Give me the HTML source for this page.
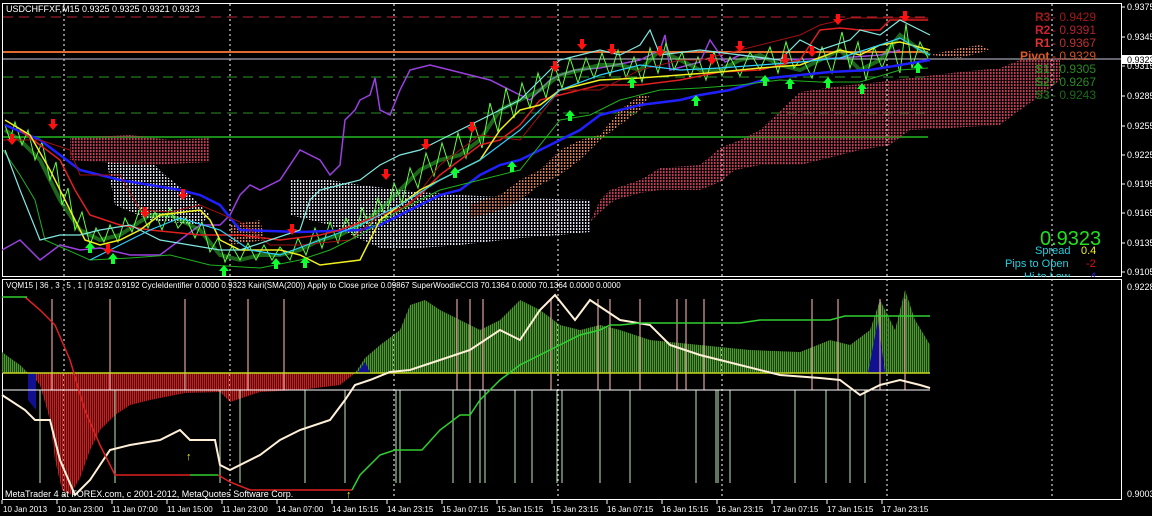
<!DOCTYPE html>
<html><head><meta charset="utf-8"><style>
html,body{margin:0;padding:0;background:#000;width:1152px;height:516px;overflow:hidden}
svg{display:block}
text{font-family:"Liberation Sans",sans-serif}
</style></head><body>
<svg width="1152" height="516" viewBox="0 0 1152 516" xmlns="http://www.w3.org/2000/svg">
<defs>
<pattern id="rd" width="3" height="3" patternUnits="userSpaceOnUse"><rect width="1.6" height="2.2" fill="#c8385a"/></pattern>
<pattern id="wd" width="3" height="3" patternUnits="userSpaceOnUse"><rect width="1.4" height="2" fill="#e0e0f0"/></pattern>
<pattern id="od" width="3" height="3" patternUnits="userSpaceOnUse"><rect width="1.4" height="2" fill="#e08050"/></pattern>
<pattern id="rh" width="2" height="4" patternUnits="userSpaceOnUse"><rect width="1.4" height="4" fill="#c82020"/></pattern>
<pattern id="gh" width="2" height="4" patternUnits="userSpaceOnUse"><rect width="1.4" height="4" fill="#4a9a30"/></pattern>
<g id="dn"><polygon points="-2,-6 2,-6 2,-1 5,-1 0,5 -5,-1 -2,-1" fill="#ff1010"/></g>
<g id="up"><polygon points="-2,6 2,6 2,1 5,1 0,-5 -5,1 -2,1" fill="#10ff30"/></g>
</defs>
<rect width="1152" height="516" fill="#000"/>
<rect x="2.5" y="3.5" width="1119" height="273" fill="none" stroke="#fff" stroke-width="1"/>
<rect x="2.5" y="279.5" width="1119" height="220" fill="none" stroke="#fff" stroke-width="1"/>
<g stroke="#fff" stroke-dasharray="2,3" stroke-width="1">
<path d="M64 4V499M230 4V499M394 4V499M558 4V499M722 4V499M887 4V499M1052 4V499"/>
</g>
<path d="M3 17H928" stroke="#c02030" stroke-dasharray="10,6"/>
<path d="M3 52H928" stroke="#e06a30" stroke-width="2"/>
<path d="M3 59H1121" stroke="#c8c8d8"/>
<path d="M3 77H928" stroke="#2a9a2a" stroke-dasharray="10,6"/>
<path d="M3 113H928" stroke="#2a8a2a" stroke-dasharray="10,6"/>
<path d="M3 137H928" stroke="#1a8a1a" stroke-width="2"/>
<!-- clouds -->
<polygon points="590,222 600,212 615,200 640,193 660,190 700,190 720,182 735,170 760,165 800,165 840,155 860,150 890,145 910,130 950,128 1000,125 1020,110 1040,96 1060,80 1060,58 1020,60 1000,68 960,72 910,78 880,82 840,86 800,92 760,130 740,140 720,148 700,165 660,168 640,180 610,190 600,200" fill="url(#rd)"/>
<polygon points="290,180 330,180 360,185 420,192 460,195 520,198 590,200 590,232 560,235 520,238 460,245 420,248 380,248 330,225 290,215" fill="url(#wd)"/>
<polygon points="105,152 140,150 165,175 190,195 210,215 200,225 150,220 115,205" fill="url(#wd)"/>
<polygon points="70,138 130,135 170,140 210,138 210,162 150,165 100,162 70,160" fill="url(#rd)"/>
<polygon points="470,205 500,195 520,180 540,170 560,150 580,140 600,135 620,110 640,95 650,95 640,110 620,125 600,140 580,160 560,175 540,185 520,200 500,210 470,218" fill="url(#od)"/>
<polygon points="230,225 260,220 265,240 230,245" fill="url(#od)"/>
<polygon points="930,55 960,48 980,45 990,50 960,58" fill="url(#od)"/>
<polyline fill="none" stroke="#9a40e0" stroke-width="1.5" points="2,250 20,240 40,260 60,245 80,250 100,248 130,255 160,255 180,240 200,225 220,225 230,215 240,195 250,185 260,190 280,180 300,150 320,160 330,175 340,165 345,120 355,110 360,100 370,95 375,78 380,110 390,115 400,90 410,70 430,65 450,70 470,75 490,80 510,90 530,100 540,90 550,80 560,75 575,70 600,68 640,60 660,50 665,35 670,70 700,62 710,40 725,62 740,55 780,60 840,58 880,55 900,50"/>
<polyline fill="none" stroke="#40e040" stroke-width="4" stroke-opacity="0.45" points="5,130 20,140 40,160 60,200 80,230 100,240 120,235 150,215 170,215 200,230 220,255 240,260 260,255 280,255 300,250 320,240 340,235 360,225 380,210 400,190 420,170 440,160 460,155 480,140 500,110 520,100 540,90 560,75 580,70 600,65 620,65 640,70 660,50 680,60 700,70 720,70 740,60 760,55 780,65 800,70 820,60 840,50 860,70 880,60 900,35 920,50 930,55"/>
<polyline fill="none" stroke="#60ff40" stroke-width="1" points="5,125 10,140 15,122 22,145 28,130 35,160 42,142 50,180 56,162 62,205 68,188 75,230 82,212 90,245 96,228 104,242 110,225 118,242 125,218 132,232 140,208 148,228 155,212 162,230 170,208 178,228 186,218 195,238 202,222 210,252 218,238 225,262 232,246 240,260 248,243 256,260 264,245 272,260 280,247 290,260 298,238 306,255 315,228 322,248 330,222 338,243 346,218 355,238 362,208 370,228 378,198 386,218 394,183 402,203 410,168 418,188 426,153 434,176 442,143 450,168 458,133 466,158 474,123 482,148 490,103 498,132 506,88 514,118 522,83 530,108 538,73 546,98 554,64 562,88 570,58 578,83 586,58 594,78 602,53 610,76 618,50 626,78 634,57 642,82 650,48 658,73 666,43 674,70 682,52 690,78 698,57 706,80 714,52 722,76 730,57 740,76 750,52 760,70 770,47 778,73 786,42 794,68 802,57 812,78 822,47 832,73 842,32 850,68 858,42 866,80 874,47 882,68 892,42 900,73 906,24 912,68 920,42 928,58"/>
<polyline fill="none" stroke="#2020ff" stroke-width="2.5" points="5,125 40,140 60,155 80,170 120,180 150,185 180,190 200,195 220,205 240,230 300,232 360,230 380,225 400,215 420,205 440,195 460,190 480,175 500,165 520,160 540,150 560,140 580,130 600,115 640,105 680,100 700,95 730,90 770,78 800,75 830,72 870,70 900,65 930,60"/>
<polyline fill="none" stroke="#e02020" stroke-width="1.5" points="20,130 60,160 75,190 90,215 120,225 150,230 200,235 240,235 280,240 320,235 340,230 380,215 400,210 420,195 440,175 460,160 480,145 500,140 520,125 540,100 560,95 580,90 600,85 640,85 680,80 720,72 760,70 800,60 820,30 840,28 860,30 880,30 890,20 928,20"/>
<polyline fill="none" stroke="#a01010" stroke-width="1" points="3,140 40,140 70,150 80,175 120,175 140,210 170,212 200,205 240,222 270,245 300,245 350,240 380,215 410,205 440,165 480,135 520,140 560,90 600,90 640,70 680,60 700,60 740,50 780,40 800,35 820,25 850,18 900,18 928,18"/>
<polyline fill="none" stroke="#20b020" stroke-width="1" points="3,150 20,175 35,200 45,240 90,260 130,258 170,255 210,265 260,268 300,260 330,250 360,235 400,210 440,190 480,180 520,170 560,120 590,115 620,100 660,90 700,88 740,85 780,80 820,82 860,82 900,70 928,68"/>
<polyline fill="none" stroke="#f0f020" stroke-width="1.5" points="5,120 30,135 50,170 70,210 85,240 100,245 120,240 140,230 160,215 200,210 210,220 220,240 240,250 280,250 300,255 320,265 360,260 380,220 400,205 420,190 440,180 460,170 480,160 500,130 520,110 540,105 560,90 580,85 600,80 640,78 680,75 720,72 760,68 800,65 840,50 860,55 880,45 900,42 930,50"/>
<polyline fill="none" stroke="#80e8e0" stroke-width="1.2" points="5,150 20,190 40,240 60,235 80,235 100,230 130,225 160,240 190,245 220,250 240,250 270,240 300,230 310,200 320,190 340,185 360,180 380,165 400,155 420,150 440,140 460,130 480,120 500,110 520,100 540,80 560,60 580,55 600,50 620,55 640,45 650,30 660,55 700,50 740,55 780,60 800,40 820,50 850,40 860,30 880,35 900,20 920,30 930,35"/>
<polyline fill="none" stroke="#30d0ff" stroke-width="1.2" points="90,260 120,245 150,230 180,218 220,230 250,250 280,255 320,240 360,225 400,205 440,180 480,160 520,130 560,90 600,75 640,65 680,70 720,68 760,65 800,62 840,58 880,45 900,38 920,50 930,55"/>
<g>
<use href="#dn" x="53" y="125"/><use href="#dn" x="145" y="213"/><use href="#dn" x="183" y="195"/><use href="#dn" x="108" y="250"/><use href="#dn" x="292" y="230"/><use href="#dn" x="386" y="175"/><use href="#dn" x="426" y="145"/><use href="#dn" x="472" y="128"/><use href="#dn" x="555" y="67"/><use href="#dn" x="582" y="45"/><use href="#dn" x="612" y="50"/><use href="#dn" x="660" y="52"/><use href="#dn" x="712" y="60"/><use href="#dn" x="740" y="47"/><use href="#dn" x="785" y="60"/><use href="#dn" x="812" y="52"/><use href="#dn" x="838" y="20"/><use href="#dn" x="905" y="17"/><use href="#dn" x="12" y="140"/>
<use href="#up" x="90" y="247"/><use href="#up" x="113" y="258"/><use href="#up" x="224" y="270"/><use href="#up" x="276" y="263"/><use href="#up" x="305" y="262"/><use href="#up" x="455" y="172"/><use href="#up" x="512" y="166"/><use href="#up" x="570" y="115"/><use href="#up" x="632" y="82"/><use href="#up" x="696" y="100"/><use href="#up" x="765" y="80"/><use href="#up" x="790" y="83"/><use href="#up" x="828" y="82"/><use href="#up" x="862" y="88"/><use href="#up" x="918" y="67"/>
</g>
<text x="6" y="12" font-size="9" fill="#fff">USDCHFFXF,M15  0.9325 0.9325 0.9321 0.9323</text>
<g font-size="12" font-weight="bold">
<text x="1035" y="21" fill="#a01818">R3</text><text x="1052" y="21" fill="#a01818" font-weight="normal">- 0.9429</text>
<text x="1035" y="34" fill="#d02030">R2</text><text x="1052" y="34" fill="#b02030" font-weight="normal">- 0.9391</text>
<text x="1035" y="47" fill="#e03030">R1</text><text x="1052" y="47" fill="#c03030" font-weight="normal">- 0.9367</text>
<text x="1020" y="60" fill="#e05a20">Pivot</text><text x="1052" y="60" fill="#d05020" font-weight="normal">- 0.9329</text>
<text x="1035" y="73" fill="#2a8a20">S1</text><text x="1052" y="73" fill="#2a8a20" font-weight="normal">- 0.9305</text>
<text x="1035" y="86" fill="#2a8a20">S2</text><text x="1052" y="86" fill="#2a8a20" font-weight="normal">- 0.9267</text>
<text x="1035" y="99" fill="#1a6a18">S3</text><text x="1052" y="99" fill="#1a6a18" font-weight="normal">- 0.9243</text>
</g>
<text x="1040" y="245" font-size="20" fill="#20e020">0.9323</text>
<g font-size="11">
<text x="1035" y="254" fill="#20d0e0">Spread</text><text x="1081" y="254" fill="#f0f020">0.4</text>
<text x="1005" y="267" fill="#20d0e0">Pips to Open</text><text x="1086" y="267" fill="#e01010">-2</text>
<text x="1024" y="280" fill="#20d0e0">Hi to Low</text><text x="1090" y="280" fill="#2020e0">4</text>
</g>
<rect x="0" y="277" width="1122" height="2" fill="#000"/>
<path d="M3 279.5H1121" stroke="#fff"/>
<g font-size="9" fill="#fff">
<text x="1127" y="10">0.9375</text><text x="1127" y="40">0.9345</text><text x="1127" y="69">0.9315</text><text x="1127" y="99">0.9285</text><text x="1127" y="129">0.9255</text><text x="1127" y="158">0.9225</text><text x="1127" y="187">0.9195</text><text x="1127" y="216">0.9165</text><text x="1127" y="246">0.9135</text><text x="1127" y="275">0.9105</text><text x="1127" y="290">0.9228</text><text x="1127" y="497">0.9003</text>
</g>
<rect x="1122" y="55" width="30" height="9" fill="#fff"/>
<text x="1127" y="63" font-size="9" fill="#000">0.9323</text>
<!-- bottom panel -->
<polygon points="30,373 40,385 50,420 55,460 62,490 70,495 80,478 90,450 100,430 115,415 130,405 150,400 185,393 220,392 230,402 260,392 300,390 340,385 355,373" fill="url(#rh)"/>
<polygon points="355,373 365,358 380,345 400,330 410,305 425,300 440,310 460,320 480,330 500,320 520,300 540,310 560,325 580,330 600,325 620,330 650,340 700,345 750,350 800,352 830,340 850,345 870,330 880,300 895,330 905,290 915,320 930,345 930,373" fill="url(#gh)"/>
<polygon points="2,373 2,352 10,358 20,365 28,373" fill="url(#gh)"/>
<polygon points="28,373 36,373 36,410 28,400" fill="#101090"/>
<polygon points="357,373 365,362 370,373" fill="#101090"/>
<polygon points="868,373 878,320 885,373" fill="#101090"/>
<g stroke="#e0a0a0" stroke-width="1.2">
<path d="M52 299V390M110 299V390M185 299V390M248 299V390M284 299V390M457 299V390M470 299V390M483 299V390M551 299V390M598 299V390M610 299V390M640 299V390M677 299V390M686 299V390M704 299V390M812 299V390M838 299V390M880 299V390M905 299V390"/>
</g>
<g stroke="#a0c0a0" stroke-width="1.2">
<path d="M40 390V483M115 390V483M220 390V483M240 390V483M305 390V483M345 390V483M396 390V483M400 390V483M453 390V483M470 390V483M480 390V483M485 390V483M515 390V483M532 390V483M557 390V483M562 390V483M600 390V483M630 390V483M696 390V483M716 390V483M718 390V483M730 390V483M795 390V483M826 390V483M850 390V483M865 390V483"/>
</g>
<path d="M3 373H930" stroke="#c8d820" stroke-width="1.5"/>
<path d="M3 390H930" stroke="#fff" stroke-width="1"/>
<polyline fill="none" stroke="#fff0d8" stroke-width="2" points="2,395 25,410 35,420 50,420 60,460 75,495 90,480 110,450 130,445 160,440 180,430 185,435 190,440 215,440 220,465 230,470 260,455 280,440 300,430 330,420 345,400 355,385 370,380 390,372 410,370 440,360 470,350 500,330 520,340 540,310 555,295 575,320 590,300 620,320 650,325 670,345 700,355 740,365 780,375 820,378 840,380 860,395 880,385 900,380 920,385 930,388"/>
<polyline fill="none" stroke="#e02020" stroke-width="1.5" points="25,297 40,310 55,325 70,360 85,410 100,445 115,475 190,475"/>
<polyline fill="none" stroke="#30d030" stroke-width="1.5" points="190,475 218,475"/>
<polyline fill="none" stroke="#e02020" stroke-width="1.5" points="218,475 230,482 250,490 352,490"/>
<polyline fill="none" stroke="#30d030" stroke-width="1.5" points="2,297 27,297"/>
<polyline fill="none" stroke="#30d030" stroke-width="1.5" points="352,490 360,475 380,455 395,450 422,450 440,430 460,415 470,415 480,400 500,380 520,365 540,355 560,345 580,335 600,330 610,325 620,325 640,323 740,323 760,320 830,320 845,316 930,316"/>
<text x="186" y="460" font-size="11" fill="#f0f020">↑</text>
<text x="346" y="498" font-size="11" fill="#f0f020">↑</text>
<text x="6" y="288" font-size="8" fill="#fff">VQM15 | 36 , 3 , 5 , 1  |  0.9192 0.9192  CycleIdentifier 0.0000 0.9323  Kairi(SMA(200)) Apply to Close price 0.09867  SuperWoodieCCI3 70.1364 0.0000 70.1364 0.0000 0.0000</text>
<text x="5" y="497" font-size="9" fill="#fff">MetaTrader 4 at FOREX.com, c 2001-2012, MetaQuotes Software Corp.</text>
<g font-size="8" fill="#fff">
<text x="3" y="512">10 Jan 2013</text><text x="57" y="512">10 Jan 23:00</text><text x="112" y="512">11 Jan 07:00</text><text x="167" y="512">11 Jan 15:00</text><text x="222" y="512">11 Jan 23:00</text><text x="277" y="512">14 Jan 07:00</text><text x="332" y="512">14 Jan 15:15</text><text x="387" y="512">14 Jan 23:15</text><text x="442" y="512">15 Jan 07:15</text><text x="497" y="512">15 Jan 15:15</text><text x="552" y="512">15 Jan 23:15</text><text x="607" y="512">16 Jan 07:15</text><text x="662" y="512">16 Jan 15:15</text><text x="717" y="512">16 Jan 23:15</text><text x="772" y="512">17 Jan 07:15</text><text x="827" y="512">17 Jan 15:15</text><text x="882" y="512">17 Jan 23:15</text>
</g>
<g stroke="#fff"><path d="M2 500v4M57 500v4M112 500v4M167 500v4M222 500v4M277 500v4M332 500v4M387 500v4M442 500v4M497 500v4M552 500v4M607 500v4M662 500v4M717 500v4M772 500v4M827 500v4M882 500v4"/></g>
<g stroke="#fff"><path d="M1122 7h3M1122 37h3M1122 66h3M1122 96h3M1122 126h3M1122 155h3M1122 184h3M1122 213h3M1122 243h3M1122 272h3"/></g>
</svg>
</body></html>
